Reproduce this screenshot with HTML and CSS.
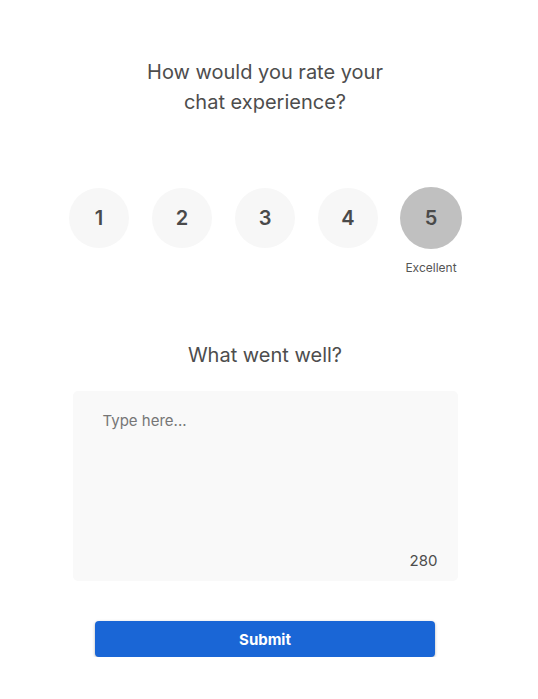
FILE: index.html
```html
<!DOCTYPE html>
<html>
<head>
<meta charset="utf-8">
<link rel="stylesheet" href="styles.css">
</head>
<body>
<div class="page">
  <h1 class="title">How would you rate your<br>chat experience?</h1>
  <div class="ratings">
    <div class="rate"><div class="circle">1</div></div>
    <div class="rate"><div class="circle">2</div></div>
    <div class="rate"><div class="circle">3</div></div>
    <div class="rate"><div class="circle">4</div></div>
    <div class="rate"><div class="circle selected">5</div><div class="label">Excellent</div></div>
  </div>
  <h2 class="question">What went well?</h2>
  <div class="box">
    <div class="placeholder">Type here...</div>
    <div class="count">280</div>
  </div>
  <button class="submit">Submit</button>
</div>
</body>
</html>
```
FILE: styles.css
```css
* { box-sizing: border-box; }
html, body { margin: 0; padding: 0; background: #fff; }
body { font-family: Inter, "Noto Sans", sans-serif; color: #4a4a4a; }
.page {
  width: 530px;
  display: flex;
  flex-direction: column;
  align-items: center;
  padding-top: 57px;
}
.title {
  margin: 0;
  font-size: 20px;
  font-weight: 400;
  line-height: 30px;
  text-align: center;
  color: #4d4d4d;
}
.ratings {
  display: flex;
  gap: 23px;
  margin-top: 71px;
  height: 92px;
  align-items: flex-start;
}
.rate {
  display: flex;
  flex-direction: column;
  align-items: center;
  width: 60px;
}
.circle {
  width: 60px;
  height: 60px;
  border-radius: 50%;
  background: #f7f7f7;
  display: flex;
  align-items: center;
  justify-content: center;
  font-size: 20px;
  font-weight: 600;
  color: #4a4a4a;
}
.circle.selected {
  width: 62px;
  height: 62px;
  margin-top: -1px;
  flex: none;
  background: #c0c0c0;
}
.label {
  margin-top: 11px;
  font-size: 12px;
  color: #555;
  white-space: nowrap;
}
.question {
  margin: 60px 0 0;
  font-size: 20px;
  font-weight: 400;
  line-height: 30px;
  color: #4d4d4d;
}
.box {
  margin-top: 21px;
  width: 385px;
  height: 190px;
  background: #f9f9f9;
  border-radius: 5px;
  display: flex;
  flex-direction: column;
  justify-content: space-between;
  padding: 20px 20px 10px 30px;
}
.placeholder {
  font-size: 15px;
  color: #767676;
  line-height: 20px;
}
.count {
  align-self: flex-end;
  font-size: 15px;
  color: #4d4d4d;
  line-height: 20px;
}
.submit {
  margin-top: 40px;
  width: 340px;
  height: 36px;
  border: none;
  border-radius: 4px;
  background: #1a66d6;
  color: #fff;
  font-family: Inter, sans-serif;
  font-size: 15px;
  font-weight: 700;
  box-shadow: 0 1px 3px rgba(0,0,0,0.3);
}
```
